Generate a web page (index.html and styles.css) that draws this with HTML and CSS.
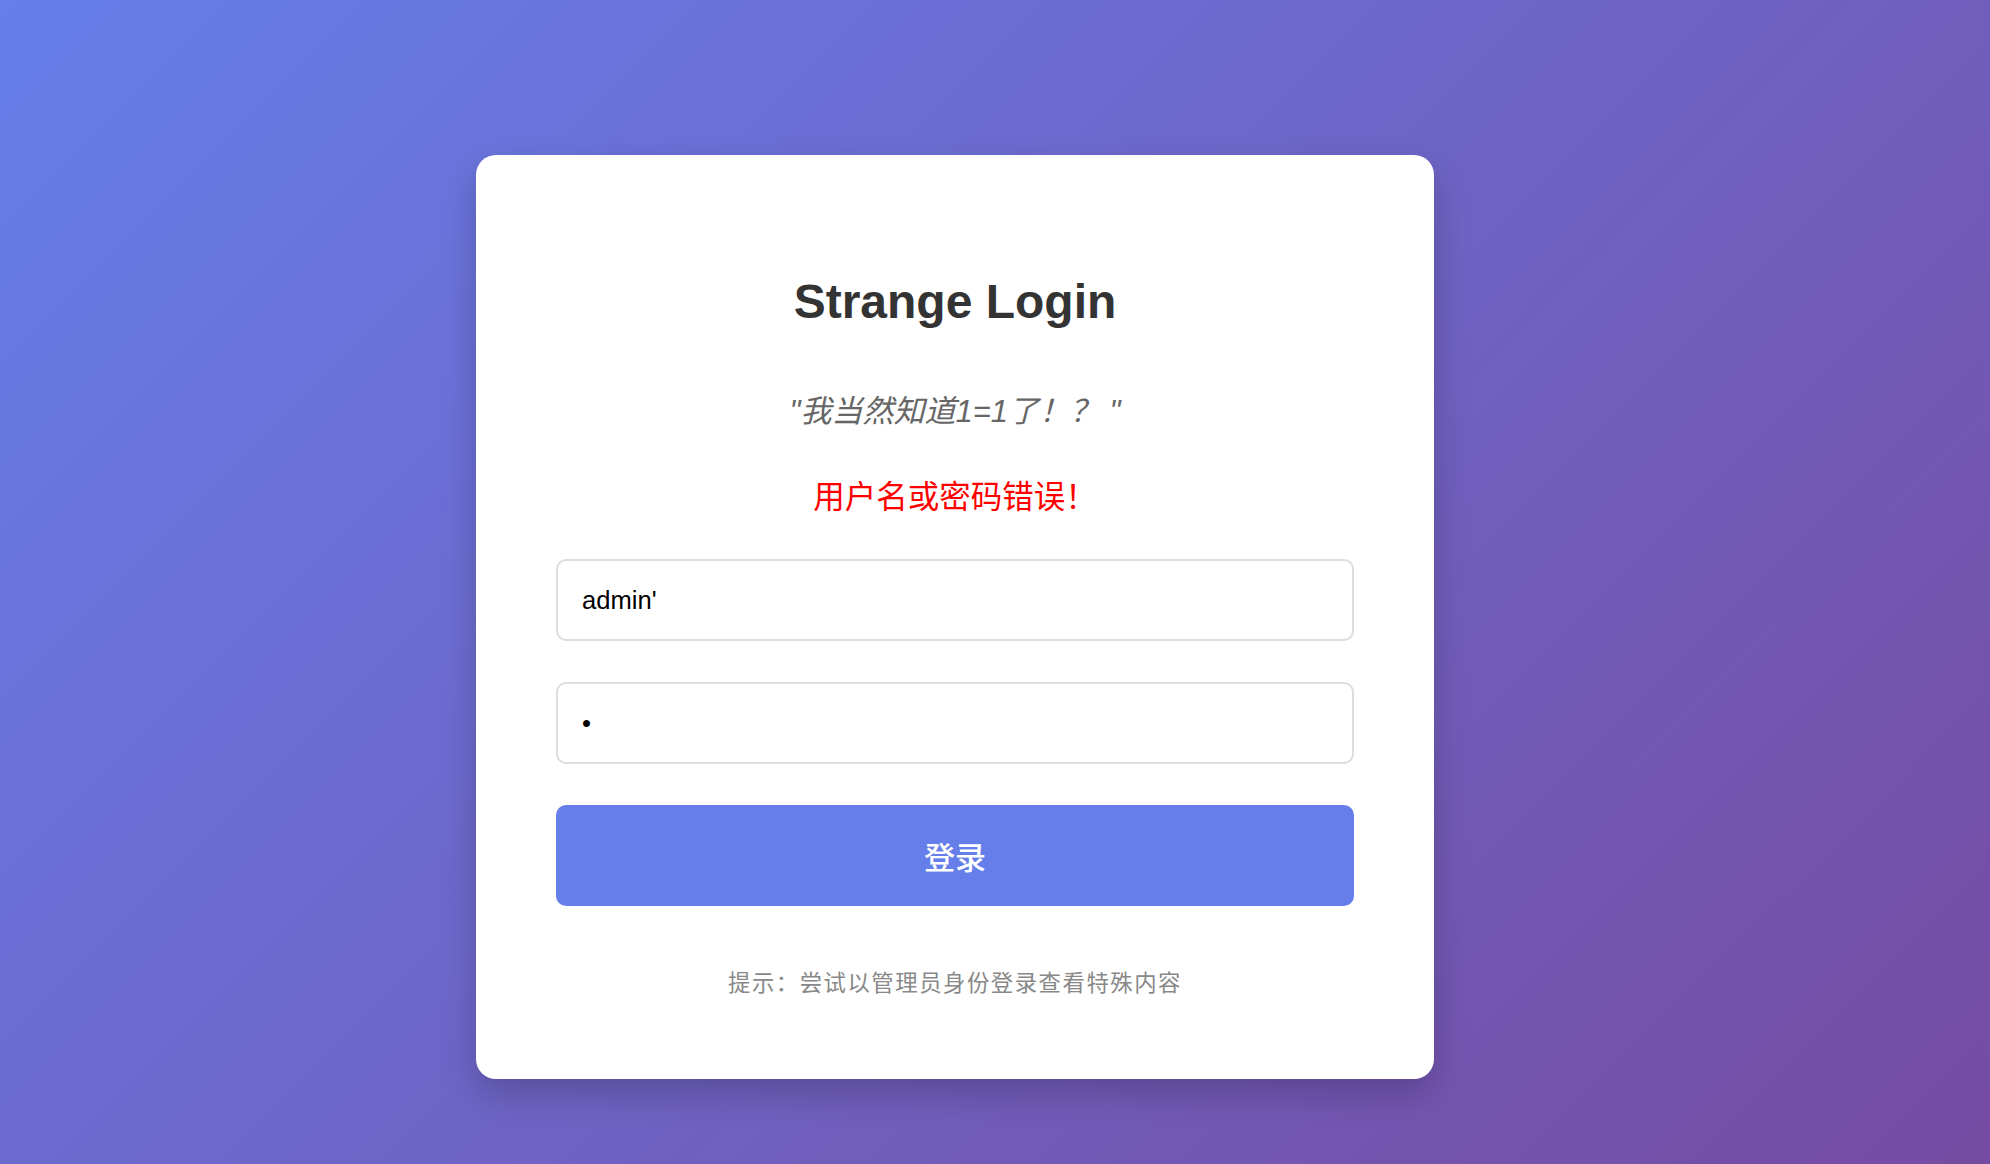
FILE: index.html
```html
<!DOCTYPE html>
<html lang="zh-CN">
<head>
<meta charset="utf-8">
<title>Strange Login</title>
<link rel="stylesheet" href="styles.css">
</head>
<body>
<div class="page">
  <form class="card">
    <h1 class="title">Strange Login</h1>
    <p class="quote">"我当然知道1=1了！？ "</p>
    <p class="error">用户名或密码错误！</p>
    <input class="field" type="text" value="admin'">
    <input class="field" type="password" value="x">
    <button class="submit" type="button">登录</button>
    <p class="hint">提示：尝试以管理员身份登录查看特殊内容</p>
  </form>
</div>
</body>
</html>
```
FILE: styles.css
```css
html, body {
  margin: 0;
  padding: 0;
}
body {
  min-height: 100vh;
  background: linear-gradient(135deg, #667eea 0%, #764ba2 100%);
  font-family: "Liberation Sans", "Noto Sans CJK SC", sans-serif;
}
.page {
  display: flex;
  justify-content: center;
  align-items: flex-start;
  padding: 155px 80px 0 0;
  box-sizing: border-box;
  min-height: 100vh;
}
.card {
  width: 958px;
  height: 924px;
  box-sizing: border-box;
  padding: 80px;
  background: #fff;
  border-radius: 20px;
  box-shadow: 0 15px 35px rgba(0, 0, 0, 0.2);
  display: flex;
  flex-direction: column;
  align-items: stretch;
  text-align: center;
}
.title {
  margin: 39px 0 0;
  font-size: 48px;
  line-height: 56px;
  font-weight: bold;
  color: #333;
}
.quote {
  margin: 64px 0 0;
  font-size: 31px;
  line-height: 36px;
  font-style: italic;
  color: #666;
}
.error {
  margin: 49px 0 0;
  font-size: 31.5px;
  line-height: 36px;
  color: #ff0000;
}
.field {
  display: block;
  margin: 44px 0 0;
  height: 82px;
  box-sizing: border-box;
  padding: 0 24px;
  border: 2px solid #dddddd;
  border-radius: 10px;
  font-family: "Liberation Sans", "Noto Sans CJK SC", sans-serif;
  font-size: 25.6px;
  color: #000;
  background: #fff;
  outline: none;
}
.field + .field {
  margin-top: 41px;
}
.submit {
  display: block;
  margin: 41px 0 0;
  height: 101px;
  border: none;
  border-radius: 10px;
  background: #667eea;
  color: #fff;
  font-family: "Noto Sans CJK SC", sans-serif;
  font-size: 31px;
  font-weight: 500;
  cursor: pointer;
}
.hint {
  margin: 60px 0 0;
  font-family: "Noto Sans CJK SC", sans-serif;
  font-size: 22.4px;
  line-height: 30px;
  letter-spacing: 1.5px;
  color: #888;
}
```
